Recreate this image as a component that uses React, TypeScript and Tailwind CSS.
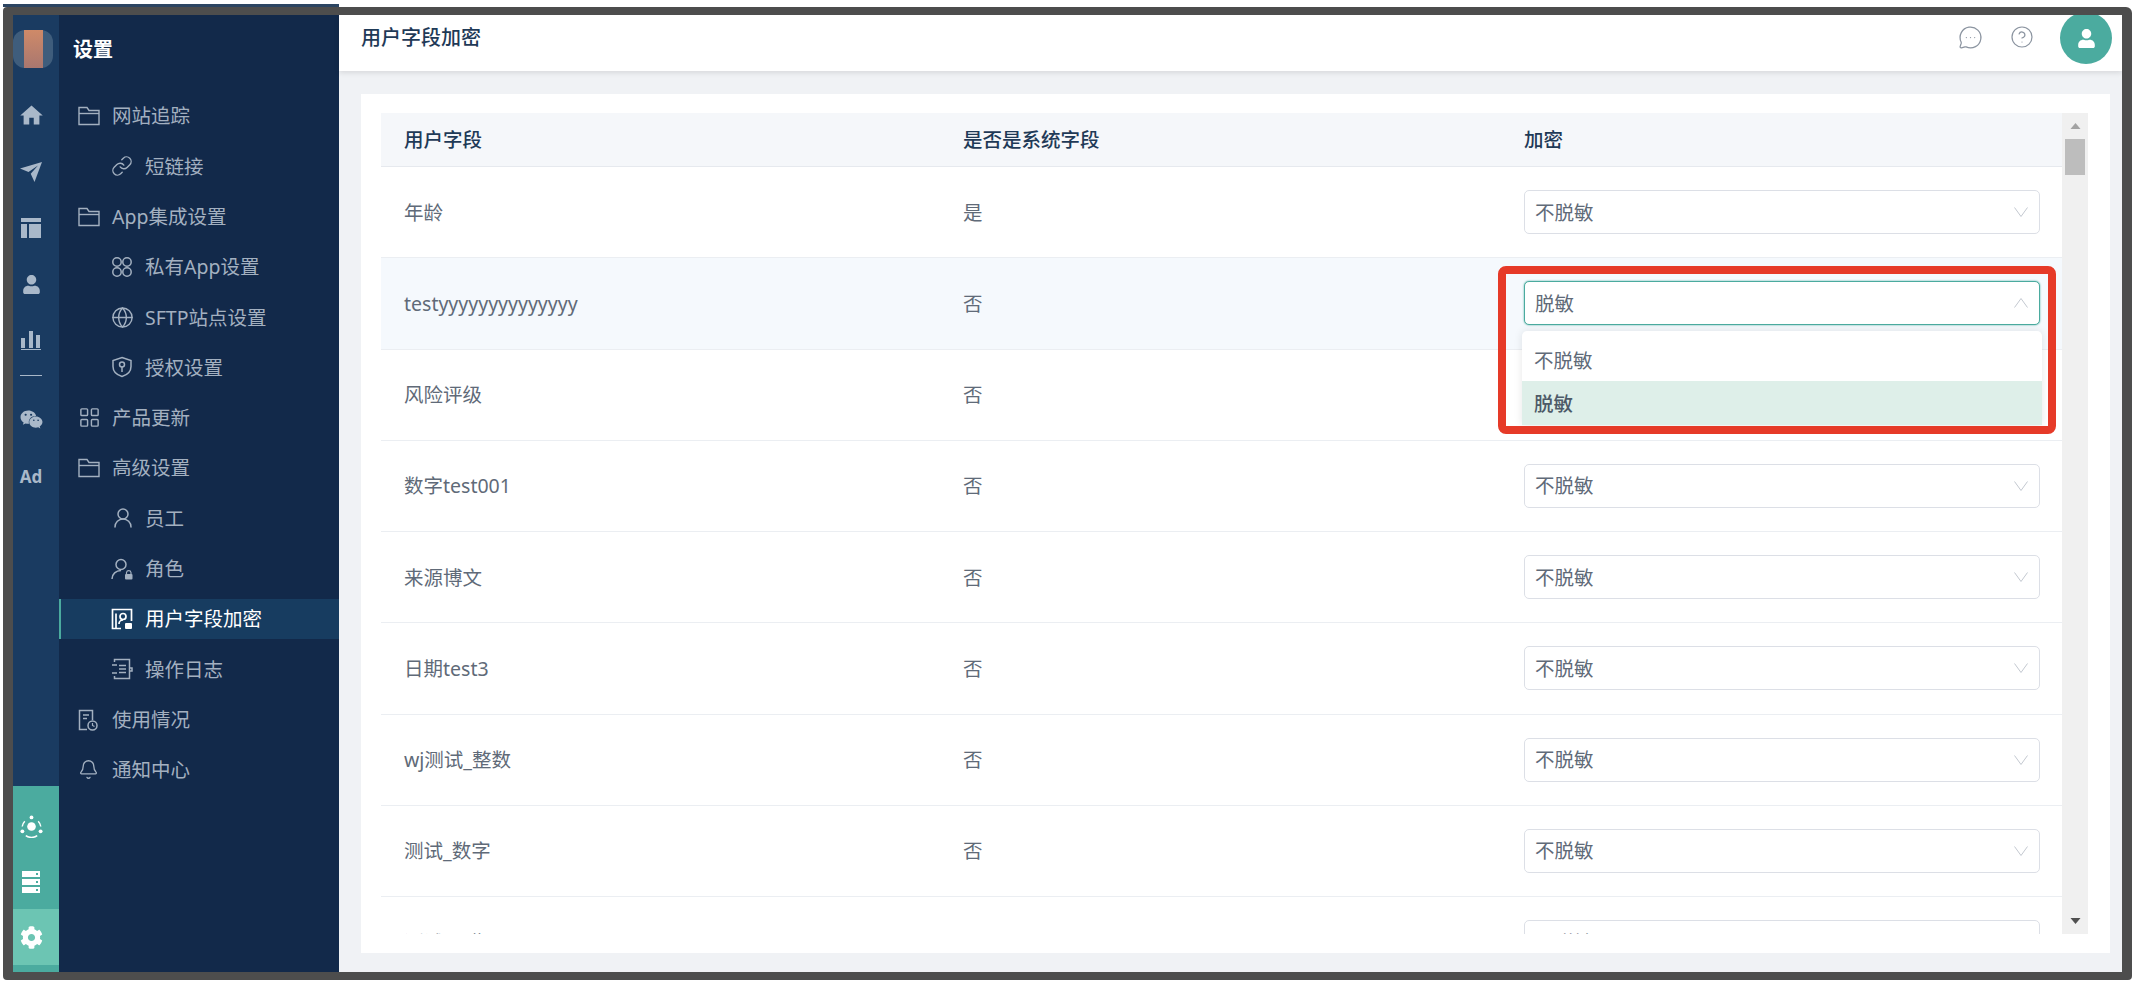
import { Bell, CircleHelp, Globe, LayoutGrid, Link as LinkIcon, MessageCircleMore, UserRound } from "lucide-react";
import { FaCog, FaUser, FaWeixin } from "react-icons/fa";
import { MdHome } from "react-icons/md";
import type { ReactNode } from "react";

const fontStack = "font-['Noto_Sans','Noto_Sans_CJK_SC',sans-serif]";

function FolderIcon() {
  return (
    <svg viewBox="0 0 22 20" className="h-[20px] w-[22px]" fill="none" stroke="currentColor" strokeWidth="1.4">
      <path d="M1 1.5h8l2 3h10v14H1z" />
      <path d="M1 7.5h20" />
    </svg>
  );
}

function AppIcon() {
  return (
    <svg viewBox="0 0 22 22" className="h-[22px] w-[22px]" fill="none" stroke="currentColor" strokeWidth="1.5">
      <circle cx="6" cy="6" r="4.2" />
      <circle cx="16" cy="6" r="4.2" />
      <circle cx="6" cy="16" r="4.2" />
      <circle cx="16" cy="16" r="4.2" />
    </svg>
  );
}

function ShieldKeyIcon() {
  return (
    <svg viewBox="0 0 22 22" className="h-[22px] w-[22px]" fill="none" stroke="currentColor" strokeWidth="1.5">
      <path d="M11 1.5l9 3v6c0 5-4 8.5-9 10-5-1.500-9-5-9-10v-6z" />
      <circle cx="11" cy="8.500" r="2.500" />
      <path d="M11 11v5" />
    </svg>
  );
}

function RoleIcon() {
  return (
    <svg viewBox="0 0 22 22" className="h-[22px] w-[22px]" fill="none" stroke="currentColor" strokeWidth="1.500">
      <circle cx="10" cy="6.500" r="5" />
      <path d="M1 21c0-5 4-8.500 9-8.500" />
      <rect x="14" y="16" width="7.500" height="5.500" rx="1" fill="currentColor" stroke="none" />
      <path d="M15.500 16v-1.500a2.300 2.300 0 0 1 4.500 0V16" strokeWidth="1.200" />
    </svg>
  );
}

function FieldLockIcon() {
  return (
    <svg viewBox="0 0 22 22" className="h-[22px] w-[22px]" fill="none" stroke="currentColor" strokeWidth="1.700">
      <path d="M10 20.500H1.500V1.500h19V13" />
      <path d="M5 5.500v15" />
      <circle cx="12" cy="8.500" r="3" />
      <path d="M8 16c0-2.500 2-4 4-4" />
      <rect x="14" y="15" width="7" height="6" rx="1" fill="currentColor" stroke="none" />
    </svg>
  );
}

function LogIcon() {
  return (
    <svg viewBox="0 0 22 22" className="h-[22px] w-[22px]" fill="none" stroke="currentColor" strokeWidth="1.500">
      <path d="M3.500 4V1.500h15v19h-15V18" />
      <path d="M1 7h5M1 15h5M8 7.500h7M8 11h7M8 14.500h7" />
      <path d="M18.500 10h2.500v3h-2.500" />
    </svg>
  );
}

function UsageIcon() {
  return (
    <svg viewBox="0 0 20 22" className="h-[22px] w-[20px]" fill="none" stroke="currentColor" strokeWidth="1.500">
      <path d="M9 20.500H1.500V1.500h13V11" />
      <path d="M5 6h6M5 9.500h4" />
      <circle cx="14.500" cy="16.500" r="4.500" />
      <path d="M14.500 14v2.500l2 1" strokeWidth="1.200" />
    </svg>
  );
}

function SendIcon() {
  return (
    <svg viewBox="0 0 22 20" className="h-[20px] w-[22px]" fill="currentColor">
      <path d="M0 6.500L22 0l-7.500 20-3.800-8.200L18 3.500 8.500 10z" />
    </svg>
  );
}

function PanelIcon() {
  return (
    <svg viewBox="0 0 20 20" className="h-[20px] w-[20px]" fill="currentColor">
      <path d="M0 0h20v4H0zM0 6h6v14H0zM8 6h12v14H8z" />
    </svg>
  );
}

function ChartIcon() {
  return (
    <svg viewBox="0 0 20 20" className="h-[20px] w-[20px]" fill="currentColor">
      <path d="M0 8h4v10H0zM8 1h4v17H8zM15 5h4v13h-4zM0 19h20v1H0z" />
    </svg>
  );
}

function HubIcon() {
  return (
    <svg viewBox="0 0 24 24" className="h-[23px] w-[23px]" fill="none" stroke="currentColor" strokeWidth="1.500">
      <circle cx="12" cy="12" r="4.500" fill="currentColor" stroke="none" />
      <circle cx="12" cy="2.500" r="2" fill="currentColor" stroke="none" />
      <circle cx="2.500" cy="17" r="2" fill="currentColor" stroke="none" />
      <circle cx="21.500" cy="17" r="2" fill="currentColor" stroke="none" />
      <path d="M5 6.500A10 10 0 0 0 2.300 12M19 6.500a10 10 0 0 1 2.700 5.500M6 21.500a11 11 0 0 0 12 0" />
    </svg>
  );
}

function ServerIcon() {
  return (
    <svg viewBox="0 0 18 22" className="h-[22px] w-[18px]" fill="currentColor">
      <path fillRule="evenodd" d="M0 0h18v6H0zM14 2v2h2V2zM0 8h18v6H0zM14 10v2h2v-2zM0 16h18v6H0zM14 18v2h2v-2z" />
    </svg>
  );
}

function SelectArrow({ up }: { up?: boolean }) {
  return (
    <svg viewBox="0 0 14 10" className="h-[10px] w-[14px]" fill="none" stroke="#c3c8d0" strokeWidth="1">
      <path d={up ? "M0.500 9.500L7 0.500l6.500 9" : "M0.500 0.500L7 9.500l6.500-9"} />
    </svg>
  );
}

type MenuItem = { label: string; icon: ReactNode; child?: boolean; active?: boolean };

const menu: MenuItem[] = [
  { label: "网站追踪", icon: <FolderIcon /> },
  { label: "短链接", icon: <LinkIcon size={22} strokeWidth={1.5} />, child: true },
  { label: "App集成设置", icon: <FolderIcon /> },
  { label: "私有App设置", icon: <AppIcon />, child: true },
  { label: "SFTP站点设置", icon: <Globe size={23} strokeWidth={1.5} />, child: true },
  { label: "授权设置", icon: <ShieldKeyIcon />, child: true },
  { label: "产品更新", icon: <LayoutGrid size={23} strokeWidth={1.5} /> },
  { label: "高级设置", icon: <FolderIcon /> },
  { label: "员工", icon: <UserRound size={24} strokeWidth={1.5} />, child: true },
  { label: "角色", icon: <RoleIcon />, child: true },
  { label: "用户字段加密", icon: <FieldLockIcon />, child: true, active: true },
  { label: "操作日志", icon: <LogIcon />, child: true },
  { label: "使用情况", icon: <UsageIcon /> },
  { label: "通知中心", icon: <Bell size={21} strokeWidth={1.5} /> },
];

const rows = [
  { name: "年龄", system: "是" },
  { name: "testyyyyyyyyyyyyyy", system: "否", open: true },
  { name: "风险评级", system: "否" },
  { name: "数字test001", system: "否" },
  { name: "来源博文", system: "否" },
  { name: "日期test3", system: "否" },
  { name: "wj测试_整数", system: "否" },
  { name: "测试_数字", system: "否" },
  { name: "测试_日期", system: "否" },
];

function IconRail() {
  return (
    <div className="flex w-[46px] shrink-0 flex-col bg-[#1a3b61] text-[#a9b8c9]">
      <div className="mt-[15px] flex h-[38px] w-[40px] justify-center rounded-[12px] bg-[#3f5d7c]">
        <div className="h-full w-[19px] bg-gradient-to-b from-[#cf8a68] to-[#a9776f]" />
      </div>
      <div className="flex w-[36px] flex-col items-center">
        <div className="mt-[37px] flex h-[20px] items-center"><MdHome size={27} /></div>
        <div className="mt-[37px] flex h-[20px] items-center"><SendIcon /></div>
        <div className="mt-[36px] flex h-[20px] items-center"><PanelIcon /></div>
        <div className="mt-[36px] flex h-[20px] items-center"><FaUser size={19} /></div>
        <div className="mt-[36px] flex h-[20px] items-center"><ChartIcon /></div>
        <div className="mt-[25px] h-px w-[22px] bg-[#a9b8c9]" />
        <div className="mt-[33px] flex h-[20px] items-center"><FaWeixin size={23} /></div>
        <div className="mt-[36px] text-[17px] font-bold leading-[24px]">Ad</div>
      </div>
      <div className="mt-auto flex h-[186px] flex-col bg-[#4bab9f] text-white">
        <div className="flex h-[85px] w-[36px] items-center justify-center pb-[5px]"><HubIcon /></div>
        <div className="flex h-[38px] w-[36px] items-start justify-center"><ServerIcon /></div>
        <div className="flex h-[56px] w-full bg-[#6cc5b3]">
          <div className="flex w-[36px] items-center justify-center"><FaCog size={23} /></div>
        </div>
      </div>
    </div>
  );
}

function Sidebar() {
  return (
    <aside className="w-[280px] shrink-0 bg-[#12294a]">
      <div className="h-[81px] pl-[14px] pt-[21px] text-[20px] font-bold leading-[28px] text-white">设置</div>
      <nav className="flex flex-col gap-[10.3px]">
        {menu.map((item) => (
          <div
            key={item.label}
            className={`flex h-[40px] items-center border-l-2 text-[19.500px] ${
              item.active ? "border-[#4bab9f] bg-[#173c60] text-white" : "border-transparent text-[#a3b0c0]"
            } ${item.child ? "pl-[50px]" : "pl-[17px]"}`}
          >
            <span className="flex w-[34px] shrink-0 items-center">{item.icon}</span>
            <span>{item.label}</span>
          </div>
        ))}
      </nav>
    </aside>
  );
}

function SelectBox({ value, open }: { value: string; open?: boolean }) {
  return (
    <div
      className={`flex h-[44px] w-[516px] items-center justify-between rounded-[5px] border bg-white pl-[10px] pr-[11px] text-[19.500px] text-[#606a78] ${
        open ? "border-[#4bab9f] shadow-[0_0_2px_#4bab9f]" : "border-[#dcdfe6]"
      }`}
    >
      <span>{value}</span>
      <SelectArrow up={open} />
    </div>
  );
}

function EncryptDropdown() {
  return (
    <>
      <div className="absolute left-[-2px] top-[50px] z-10 h-[94px] w-[520px] overflow-hidden rounded-t-[5px] bg-white text-[19.500px] text-[#606a78] shadow-[0_0_8px_rgba(0,0,0,0.1)]">
        <div className="flex h-[50px] items-center pl-[12px] pt-[8px]">不脱敏</div>
        <div className="flex h-[44px] items-center bg-[#deefe9] pl-[12px] font-medium text-[#4d5a68]">脱敏</div>
      </div>
      <div className="pointer-events-none absolute left-[-26px] top-[-15px] z-20 h-[168px] w-[558px] rounded-[8px] border-[8px] border-[#e63a28]" />
    </>
  );
}

function FieldTable() {
  return (
    <div className="flex h-[821px] overflow-hidden">
      <div className="min-w-0 flex-1 overflow-hidden">
        <div className="grid h-[54px] grid-cols-[559px_561px_1fr] items-center border-b border-[#e6e9ee] bg-[#f5f7fa] text-[19.500px] font-medium text-[#1f3a57]">
          <div className="pl-[23px]">用户字段</div>
          <div className="pl-[23px]">是否是系统字段</div>
          <div className="pl-[23px]">加密</div>
        </div>
        {rows.map((row) => (
          <div
            key={row.name}
            className={`grid h-[91.250px] grid-cols-[559px_561px_1fr] items-center border-b border-[#ebeef2] text-[19.500px] text-[#606a78] ${
              row.open ? "bg-[#f5f9fd]" : "bg-white"
            }`}
          >
            <div className="pl-[23px]">{row.name}</div>
            <div className="pl-[23px]">{row.system}</div>
            <div className="pl-[23px]">
              <div className="relative w-[516px]">
                <SelectBox value={row.open ? "脱敏" : "不脱敏"} open={row.open} />
                {row.open && <EncryptDropdown />}
              </div>
            </div>
          </div>
        ))}
      </div>
      <div className="relative flex w-[26px] shrink-0 flex-col items-center bg-[#f0f0f0]">
        <svg viewBox="0 0 10 6" className="mt-[10px] h-[6px] w-[11px] fill-[#a3a3a3]"><path d="M5 0l5 6H0z" /></svg>
        <div className="mt-[10px] h-[36px] w-[20px] bg-[#bdbdbd]" />
        <svg viewBox="0 0 10 6" className="mb-[10px] mt-auto h-[6px] w-[11px] fill-[#505050]"><path d="M0 0h10L5 6z" /></svg>
      </div>
    </div>
  );
}

export default function App() {
  return (
    <div className={`flex h-[990px] w-[2132px] flex-col overflow-hidden bg-white pb-[10px] pl-[3px] pt-[4px] ${fontStack}`}>
      <div className="h-[3px] w-[336px] shrink-0 bg-[#2c4562]" />
      <div className="flex min-h-0 flex-1 overflow-hidden rounded-[4px] rounded-tr-[6px] border-x-[10px] border-y-[8px] border-[#4d4d4d]">
        <IconRail />
        <Sidebar />
        <main className="flex min-w-0 flex-1 flex-col bg-[#f0f2f5]">
          <header className="relative z-10 flex h-[56px] shrink-0 items-start justify-between overflow-hidden bg-white pl-[22px] shadow-[0_2px_5px_rgba(0,0,0,0.1)]">
            <h1 className="mt-[9px] text-[20px] font-medium leading-[28px] text-[#1f3a57]">用户字段加密</h1>
            <div className="flex items-start pr-[10px]">
              <MessageCircleMore size={25} strokeWidth={1.200} className="mt-[10px] text-[#8b94a0]" />
              <CircleHelp size={24} strokeWidth={1.200} className="ml-[27px] mt-[10px] text-[#8b94a0]" />
              <div className="ml-[26px] mt-[-3px] flex h-[52px] w-[52px] items-center justify-center rounded-full bg-[#4bab9f] text-white">
                <FaUser size={19} />
              </div>
            </div>
          </header>
          <div className="ml-[22px] mr-[12px] mt-[23px] bg-white pb-[19px] pl-[20px] pr-[22px] pt-[19px]">
            <FieldTable />
          </div>
        </main>
      </div>
    </div>
  );
}
